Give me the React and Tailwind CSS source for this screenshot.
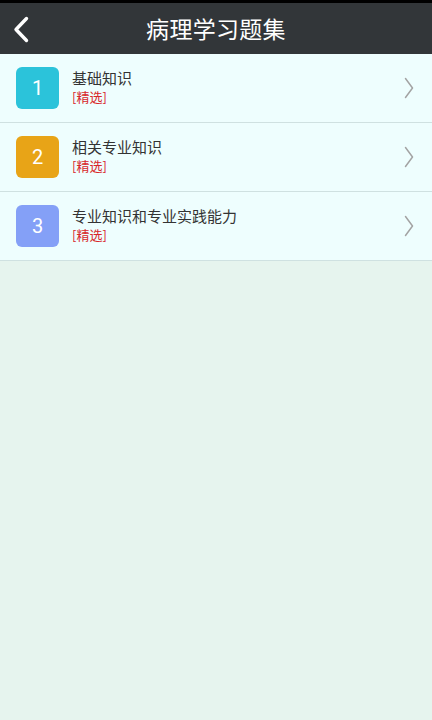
const sections = [
  { id: 1, title: "基础知识", color: "bg-[#2bc3da]" },
  { id: 2, title: "相关专业知识", color: "bg-[#e8a417]" },
  { id: 3, title: "专业知识和专业实践能力", color: "bg-[#84a0f7]" },
];

export default function App() {
  return (
    <div
      className="w-[432px] h-[720px] flex flex-col bg-[#e6f4ee] overflow-hidden"
      style={{ fontFamily: '"Noto Sans CJK SC", "Noto Sans", sans-serif' }}
    >
      {/* status strip + title bar */}
      <div className="h-[3px] bg-black" />
      <div className="h-[51px] bg-[#323639] flex items-center relative">
        <svg
          className="absolute left-[12px] top-[13px] w-[18px] h-[27px]"
          viewBox="0 0 18 27"
          fill="none"
        >
          <polyline
            points="14.5,2.5 4,13.5 14.5,24.5"
            stroke="white"
            strokeWidth="3.4"
            strokeLinecap="round"
            strokeLinejoin="round"
          />
        </svg>
        <h1 className="flex-1 text-center text-white text-[23px] leading-none tracking-[0.3px]">
          病理学习题集
        </h1>
      </div>

      <div className="flex flex-col">
        {sections.map((s) => (
          <div
            key={s.id}
            className="h-[69px] flex items-center bg-[#eefefe] border-b border-[#cfe1e1] pl-[16px] pr-[18px]"
          >
            <div
              className={`w-[43px] h-[42px] rounded-[6px] ${s.color} flex items-center justify-center text-white text-[20px] leading-none`}
              style={{ fontFamily: '"Roboto", "Noto Sans", sans-serif' }}
            >
              {s.id}
            </div>
            <div className="flex-1 ml-[13px] flex flex-col gap-[2px] -mt-[3px]">
              <span className="text-[15px] leading-[18px] text-[#333333]">{s.title}</span>
              <span className="text-[13px] leading-[15px] text-[#d8262a]">[精选]</span>
            </div>
            <svg className="w-[10px] h-[22px]" viewBox="0 0 10 22" fill="none">
              <polyline
                points="1.5,1.5 8.5,11 1.5,20.5"
                stroke="#a3a3a3"
                strokeWidth="1.5"
                strokeLinecap="round"
                strokeLinejoin="round"
              />
            </svg>
          </div>
        ))}
      </div>
    </div>
  );
}
